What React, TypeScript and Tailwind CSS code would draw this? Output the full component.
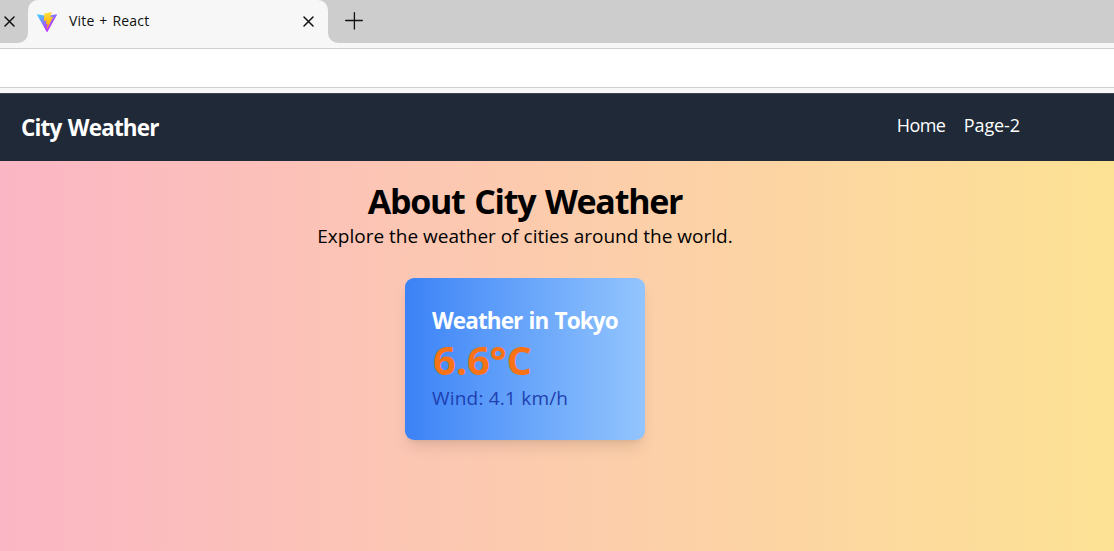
import React from "react";

function CloseIcon() {
  return (
    <svg width="11" height="11" viewBox="0 0 11 11" className="block shrink-0" fill="none" stroke="#111" strokeWidth="1.5" strokeLinecap="round">
      <path d="M1 1L10 10M10 1L1 10" />
    </svg>
  );
}

function ViteLogo() {
  return (
    <svg width="20" height="20" viewBox="0 0 256 257" className="block shrink-0">
      <defs>
        <linearGradient id="shield" x1="-.828%" x2="57.636%" y1="7.652%" y2="78.411%">
          <stop offset="0%" stopColor="#41D1FF" />
          <stop offset="100%" stopColor="#BD34FE" />
        </linearGradient>
        <linearGradient id="bolt" x1="43.376%" x2="50.316%" y1="2.242%" y2="89.03%">
          <stop offset="0%" stopColor="#FFEA83" />
          <stop offset="8.333%" stopColor="#FFDD35" />
          <stop offset="100%" stopColor="#FFA800" />
        </linearGradient>
      </defs>
      <path fill="url(#shield)" d="M255.153 37.938L134.897 252.976c-2.483 4.44-8.862 4.466-11.382.048L.875 37.958c-2.746-4.814 1.371-10.646 6.827-9.67l120.385 21.517a6.537 6.537 0 0 0 2.322-.004l117.867-21.483c5.438-.991 9.574 4.796 6.877 9.62Z" />
      <path fill="url(#bolt)" d="M185.432.063L96.44 17.501a3.268 3.268 0 0 0-2.634 3.014l-5.474 92.456a3.268 3.268 0 0 0 3.997 3.378l24.777-5.718c2.318-.535 4.413 1.507 3.936 3.838l-7.361 36.047c-.495 2.426 1.782 4.5 4.151 3.78l15.304-4.649c2.372-.72 4.652 1.36 4.15 3.788l-11.698 56.621c-.732 3.542 3.979 5.473 5.943 2.437l1.313-2.028l72.516-144.72c1.215-2.423-.88-5.186-3.54-4.672l-25.505 4.922c-2.396.462-4.435-1.77-3.759-4.114l16.646-57.705c.677-2.35-1.37-4.583-3.769-4.113Z" />
    </svg>
  );
}

function BrowserChrome() {
  return (
    <div className="bg-[#f7f7f7]">
      <div className="flex h-[43px] bg-[#f7f7f7]">
        <div className="flex w-7 shrink-0 rounded-br-[10px] bg-[#cdcdcd] pl-1 pt-4">
          <CloseIcon />
        </div>
        <div className="w-[300px] shrink-0 bg-[#cdcdcd]">
          <div className="flex h-full items-center rounded-t-[10px] bg-[#f7f7f7] pl-[9px] pr-[14px]">
            <ViteLogo />
            <span className="ml-3 pb-0.5 text-sm tracking-[0.2px] [word-spacing:1px] text-[#111]">Vite + React</span>
            <span className="ml-auto">
              <CloseIcon />
            </span>
          </div>
        </div>
        <div className="flex-1 rounded-bl-[10px] bg-[#cdcdcd] pl-[17px] pt-3">
          <svg width="18" height="18" viewBox="0 0 18 18" className="block" stroke="#111" strokeWidth="1.3" strokeLinecap="round">
            <path d="M.7 8.5H17.3M9.4 .7V17" />
          </svg>
        </div>
      </div>
      <div className="mt-[5px] h-10 border-y border-[#cfcfcf] bg-white" />
      <div className="h-[5px]" />
    </div>
  );
}

export default function App() {
  return (
    <div className="flex h-[551px] w-[1114px] flex-col overflow-hidden font-['Open_Sans','Noto_Sans',sans-serif]">
      <BrowserChrome />
      <nav className="flex h-[68px] shrink-0 items-center border-t border-[#3b4452] bg-[#1f2937] pl-[21px] pr-[94px] text-white">
        <span className="text-[22.5px] font-bold tracking-[-0.83px] [word-spacing:1.3px]">City Weather</span>
        <div className="ml-auto flex gap-[18.5px] pb-[5px] text-[18px]">
          <a className="tracking-[-0.6px]">Home</a>
          <a className="tracking-[-0.1px]">Page-2</a>
        </div>
      </nav>
      <main className="flex flex-1 flex-col items-center bg-[linear-gradient(to_right,#fbb6c5,#fde294)] pr-16 pt-5 text-black">
        <h1 className="text-[34px] leading-10 font-bold tracking-[-1.25px] [word-spacing:2px] whitespace-nowrap">About City Weather</h1>
        <p className="pt-px text-[19px] leading-7 whitespace-nowrap">Explore the weather of cities around the world.</p>
        <section className="mt-7 h-[162px] w-60 rounded-[9px] bg-linear-to-r from-[#3b82f6] to-[#93c5fd] pt-7 pl-[27px] shadow-lg">
          <h2 className="text-[22.5px] leading-[30px] font-bold tracking-[-0.9px] [word-spacing:1.2px] whitespace-nowrap text-white">Weather in Tokyo</h2>
          <p className="pt-px pl-px text-[40px] leading-[46px] font-bold tracking-[-0.2px] whitespace-nowrap text-[#f97316]">6.6°C</p>
          <p className="pt-px text-[19px] leading-7 tracking-[0.2px] whitespace-nowrap text-[#1e40af]">Wind: 4.1 km/h</p>
        </section>
      </main>
    </div>
  );
}
